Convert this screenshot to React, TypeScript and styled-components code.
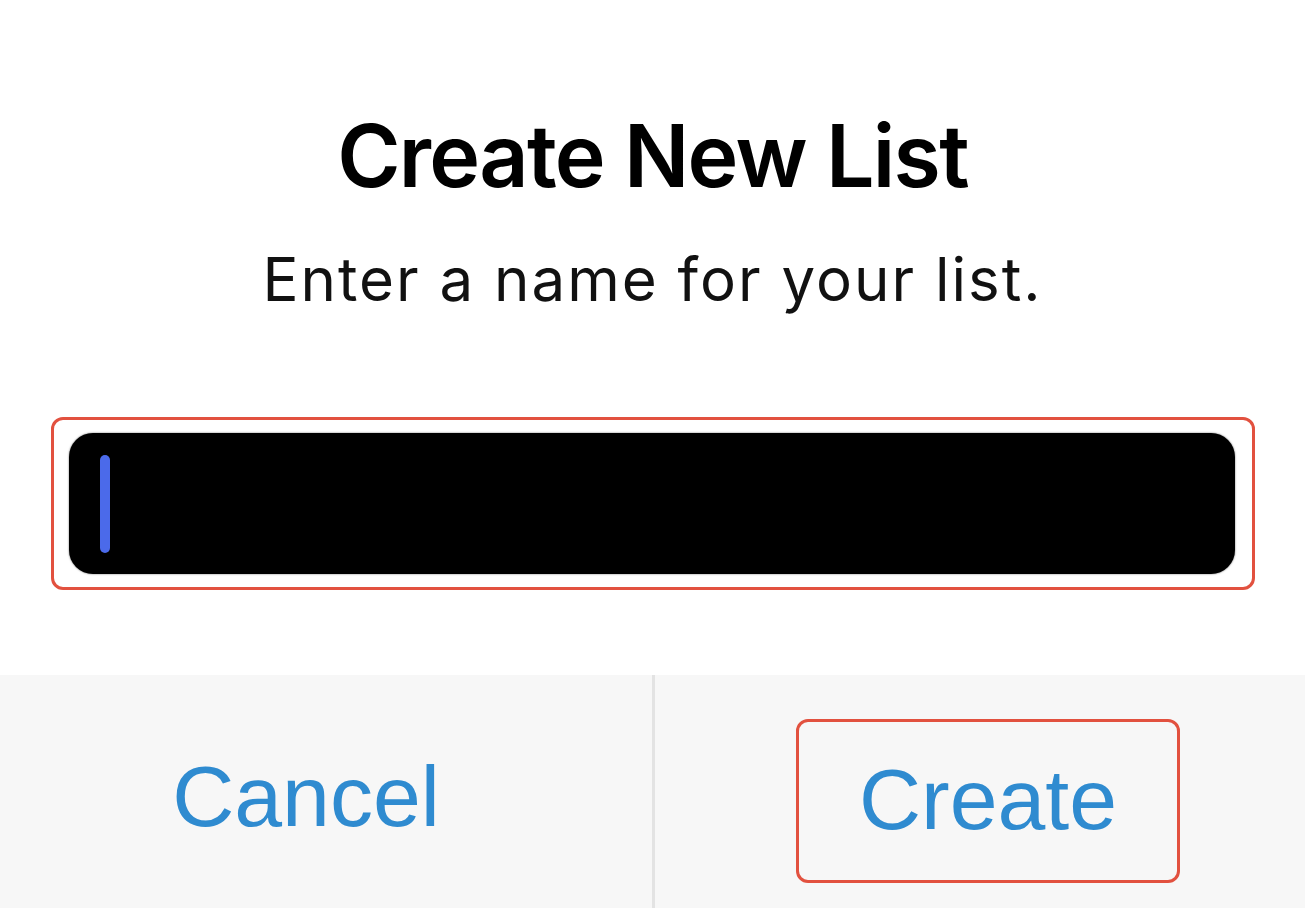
import React from "react";
import styled, { createGlobalStyle } from "styled-components";

const GlobalStyle = createGlobalStyle`
  html, body {
    margin: 0;
    padding: 0;
    background: #ffffff;
  }
  * {
    box-sizing: border-box;
  }
`;

const App: React.FC = () => {
  return (
    <>
      <GlobalStyle />
      <Alert>
        <Content>
          <Title>Create New List</Title>
          <Message>Enter a name for your list.</Message>
          <Highlight>
            <Field>
              <Caret />
            </Field>
          </Highlight>
        </Content>
        <Footer>
          <ActionCell>
            <Action>Cancel</Action>
          </ActionCell>
          <ActionCell $divider>
            <ActionHighlight>
              <Action>Create</Action>
            </ActionHighlight>
          </ActionCell>
        </Footer>
      </Alert>
    </>
  );
};

export default App;

const Alert = styled.div`
  width: 1305px;
  height: 908px;
  display: flex;
  flex-direction: column;
  background: #ffffff;
  overflow: hidden;
`;

const Content = styled.div`
  height: 675px;
  display: flex;
  flex-direction: column;
  align-items: center;
  padding-top: 102px;
`;

const Title = styled.h1`
  margin: 0;
  font-family: Inter, "Liberation Sans", sans-serif;
  font-weight: 600;
  font-size: 86px;
  line-height: 108px;
  letter-spacing: -1.7px;
  color: #000000;
`;

const Message = styled.p`
  margin: 31px 0 0;
  font-family: Inter, "Liberation Sans", sans-serif;
  font-weight: 400;
  font-size: 60px;
  line-height: 76px;
  letter-spacing: 2px;
  color: #111111;
`;

const Highlight = styled.div`
  align-self: stretch;
  margin: 100px 50px 0 51px;
  height: 173px;
  padding: 13px 17px 13px 15px;
  border: 3px solid #e2513f;
  border-radius: 12px;
`;

const Field = styled.div`
  height: 100%;
  display: flex;
  align-items: center;
  padding-left: 31px;
  background: #000000;
  border-radius: 24px;
  box-shadow: 0 0 2px rgba(0, 0, 0, 0.6);
`;

const Caret = styled.span`
  width: 10px;
  height: 98px;
  border-radius: 5px;
  background: #4b6aea;
`;

const Footer = styled.div`
  flex: 1;
  display: grid;
  grid-template-columns: 652px 1fr;
  background: #f7f7f7;
`;

const ActionCell = styled.div<{ $divider?: boolean }>`
  display: flex;
  justify-content: center;
  align-items: flex-start;
  padding: ${(p) => (p.$divider ? "44px 0 0 16px" : "44px 40px 0 0")};
  border-left: ${(p) => (p.$divider ? "3px solid #e3e3e3" : "none")};
`;

const ActionHighlight = styled.div`
  width: 384px;
  height: 164px;
  display: flex;
  justify-content: center;
  border: 3px solid #e2513f;
  border-radius: 12px;
`;

const Action = styled.div`
  height: 154px;
  display: flex;
  align-items: center;
  font-family: "Liberation Sans", Arial, sans-serif;
  font-size: 86px;
  color: #2f8bd0;
`;
